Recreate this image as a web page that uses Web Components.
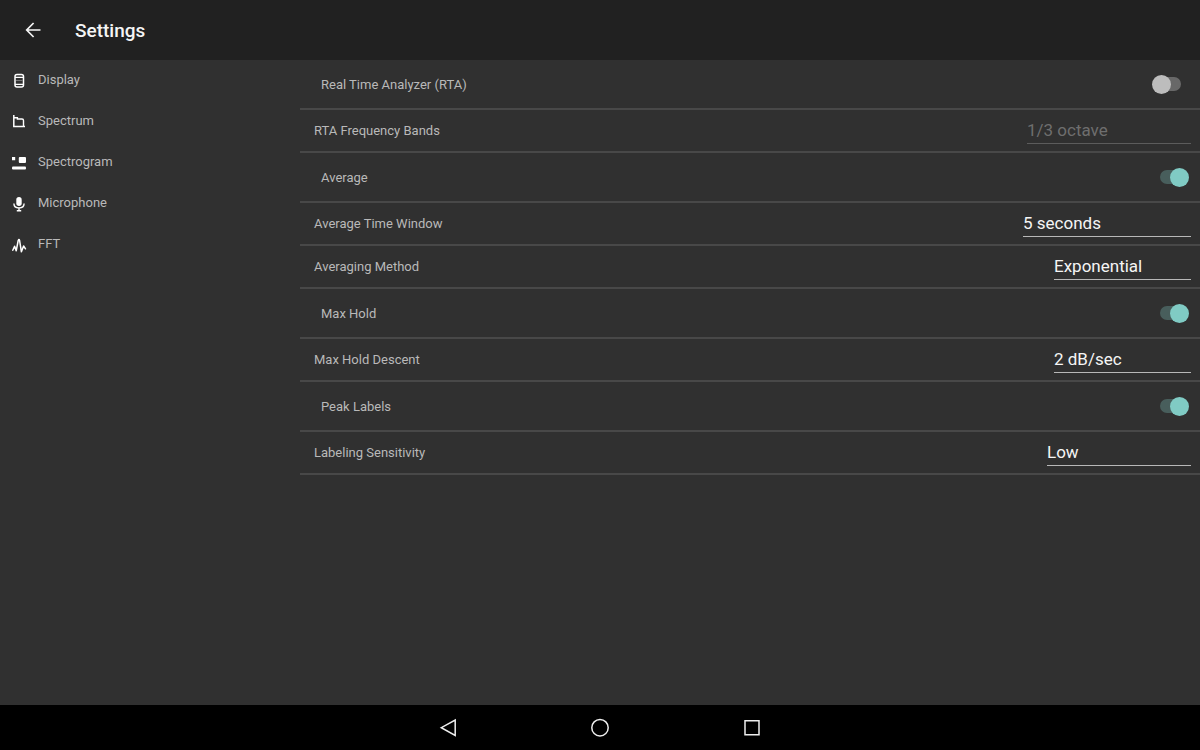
<!DOCTYPE html>
<html lang="en">
<head>
<meta charset="utf-8">
<title>Settings</title>
<style>
  html, body { height: 100%; margin: 0; }
  body { background: #303030; color: #b9b9b9; font: 13px/18px Roboto, "Liberation Sans", sans-serif; }
</style>
</head>
<body>
<settings-app>
  <app-bar slot="header">Settings</app-bar>
  <nav-item slot="nav" icon="display">Display</nav-item>
  <nav-item slot="nav" icon="spectrum">Spectrum</nav-item>
  <nav-item slot="nav" icon="spectrogram">Spectrogram</nav-item>
  <nav-item slot="nav" icon="microphone">Microphone</nav-item>
  <nav-item slot="nav" icon="fft">FFT</nav-item>
  <switch-row>Real Time Analyzer (RTA)</switch-row>
  <select-row value="1/3 octave" disabled style="--field: 164px">RTA Frequency Bands</select-row>
  <switch-row checked>Average</switch-row>
  <select-row value="5 seconds" style="--field: 168px">Average Time Window</select-row>
  <select-row value="Exponential" style="--field: 137px">Averaging Method</select-row>
  <switch-row checked>Max Hold</switch-row>
  <select-row value="2 dB/sec" style="--field: 137px">Max Hold Descent</select-row>
  <switch-row checked>Peak Labels</switch-row>
  <select-row value="Low" style="--field: 144px">Labeling Sensitivity</select-row>
  <system-bar slot="footer"></system-bar>
</settings-app>
<script>
class ShadowElement extends HTMLElement {
  constructor() {
    super();
    this.attachShadow({ mode: 'open' });
  }
  connectedCallback() {
    this.shadowRoot.innerHTML = this.render();
  }
}

customElements.define('settings-app', class extends ShadowElement {
  render() {
    return `<style>
      :host { display: grid; grid-template: auto 1fr auto / 25% 1fr; min-height: 100vh; }
      header, footer { grid-column: 1 / -1; }
    </style>
    <header><slot name="header"></slot></header>
    <nav aria-label="Sections"><slot name="nav"></slot></nav>
    <main><slot></slot></main>
    <footer><slot name="footer"></slot></footer>`;
  }
});

customElements.define('app-bar', class extends ShadowElement {
  render() {
    return `<style>
      :host { display: flex; align-items: center; gap: 30px; height: 60px; padding: 0 21px; background: #212121; color: #f5f5f5; }
      button { display: flex; padding: 0; border: 0; background: none; color: inherit; }
      h1 { margin: 0; padding-top: 2px; font-size: 19px; line-height: 24px; font-weight: 500; }
    </style>
    <button aria-label="Back"><svg width="24" height="24" viewBox="0 0 24 24" fill="none" stroke="currentColor" stroke-width="1.7"><path d="M19.500 12H6M12.600 5L5.700 12l6.900 7"/></svg></button>
    <h1><slot></slot></h1>`;
  }
});

const icons = {
  display: '<rect x="4" y="1.500" width="8.500" height="12.400" rx="2" fill="none" stroke="#fff" stroke-width="1.500"/><path d="M4 4.300h8.500M4 11.300h8.500" stroke="#fff" stroke-width="1.300"/><path d="M5 7.500h6.500" stroke="#aaa" stroke-width=".6"/>',
  spectrum: '<path d="M2.800 1v11.500H14" fill="none" stroke="#fff" stroke-width="1.500"/><path d="M3 3.800h3.400v1.200h4.600q1.500 0 1.500 1.500v6" fill="none" stroke="#fff" stroke-width="1.400"/>',
  spectrogram: '<path d="M1 2h3.200v3.200H1zM8.800 2H14q1 0 1 1v4q0 1-1 1H8.800q-1 0-1-1V3q0-1 1-1z" fill="#fff"/><rect x="1" y="11.500" width="14" height="3" rx="1" fill="#fff"/>',
  microphone: '<rect x="5.300" y="1" width="5.400" height="9" rx="2.700" fill="#fff"/><path d="M2.900 7.500Q3 12 8 12t5.100-4.500M8 12v3M5.800 14.700h4.400" fill="none" stroke="#fff" stroke-width="1.400"/>',
  fft: '<path d="M1.800 13.200L3.600 9.200l1.600 4.600L7.200 3.500q.8-1.800 1.400 0l1.800 11.300 2.200-5.800 1.900 2.800" fill="none" stroke="#fff" stroke-width="1.500" stroke-linejoin="round" stroke-linecap="round"/>'
};

customElements.define('nav-item', class extends ShadowElement {
  render() {
    return `<style>
      :host { display: block; }
      a { display: flex; align-items: flex-start; gap: 11px; box-sizing: border-box; height: 41px; padding: 11px 11px 0; color: inherit; text-decoration: none; }
      svg { margin-top: 2px; }
    </style>
    <a href="#${this.getAttribute('icon')}"><svg width="16" height="16" viewBox="0 0 16 16" aria-hidden="true">${icons[this.getAttribute('icon')]}</svg><span><slot></slot></span></a>`;
  }
});

const rowStyle = `
  :host { display: flex; align-items: center; justify-content: space-between; border-bottom: 2px solid #484848; }`;

customElements.define('switch-row', class extends ShadowElement {
  render() {
    return `<style>${rowStyle}
      :host { height: 48px; padding: 0 11px 0 21px; }
      label { padding-top: 2px; }
      input { appearance: none; display: grid; align-items: center; width: 37px; height: 20px; margin: 0; }
      input:not(:checked) { color: #bdbdbd; }
      input:checked { color: #80cbc4; }
      input::before, input::after { content: ""; grid-area: 1 / 1; background: currentColor; }
      input::before { justify-self: center; width: 21px; height: 14px; border-radius: 7px; opacity: .4; }
      input:checked::before { opacity: .3; }
      input::after { width: 19px; height: 19px; border-radius: 50%; z-index: 1; }
      input:checked::after { justify-self: end; }
    </style>
    <label for="control"><slot></slot></label>
    <input id="control" type="checkbox" role="switch" ${this.hasAttribute('checked') ? 'checked' : ''}>`;
  }
});

customElements.define('select-row', class extends ShadowElement {
  render() {
    return `<style>${rowStyle}
      :host { height: 41px; padding: 0 9px 0 14px; }
      select { appearance: none; box-sizing: border-box; width: var(--field); height: 27px; margin: 0; padding: 0; border: 0; border-bottom: 1px solid #b8b8b8; border-radius: 0; background: none; color: #f5f5f5; font: 17px/24px Roboto, "Liberation Sans", sans-serif; }
      select:disabled { color: #6e6e6e; border-color: #5c5c5c; opacity: 1; }
    </style>
    <label for="control"><slot></slot></label>
    <select id="control" ${this.hasAttribute('disabled') ? 'disabled' : ''}><option>${this.getAttribute('value')}</option></select>`;
  }
});

customElements.define('system-bar', class extends ShadowElement {
  render() {
    return `<style>
      :host { display: flex; align-items: center; justify-content: center; gap: 128px; height: 45px; background: #000; }
      button { display: flex; padding: 0; border: 0; background: none; }
      svg { fill: none; stroke: #eee; stroke-width: 1.500; }
    </style>
    <button aria-label="Back"><svg width="24" height="24" viewBox="0 0 24 24"><path d="M19.200 4v15.400L5.300 11.700z"/></svg></button>
    <button aria-label="Home"><svg width="24" height="24" viewBox="0 0 24 24"><circle cx="12" cy="11.700" r="8.200"/></svg></button>
    <button aria-label="Recent apps"><svg width="24" height="24" viewBox="0 0 24 24"><path d="M5 4.700h14v14H5z"/></svg></button>`;
  }
});
</script>
</body>
</html>
